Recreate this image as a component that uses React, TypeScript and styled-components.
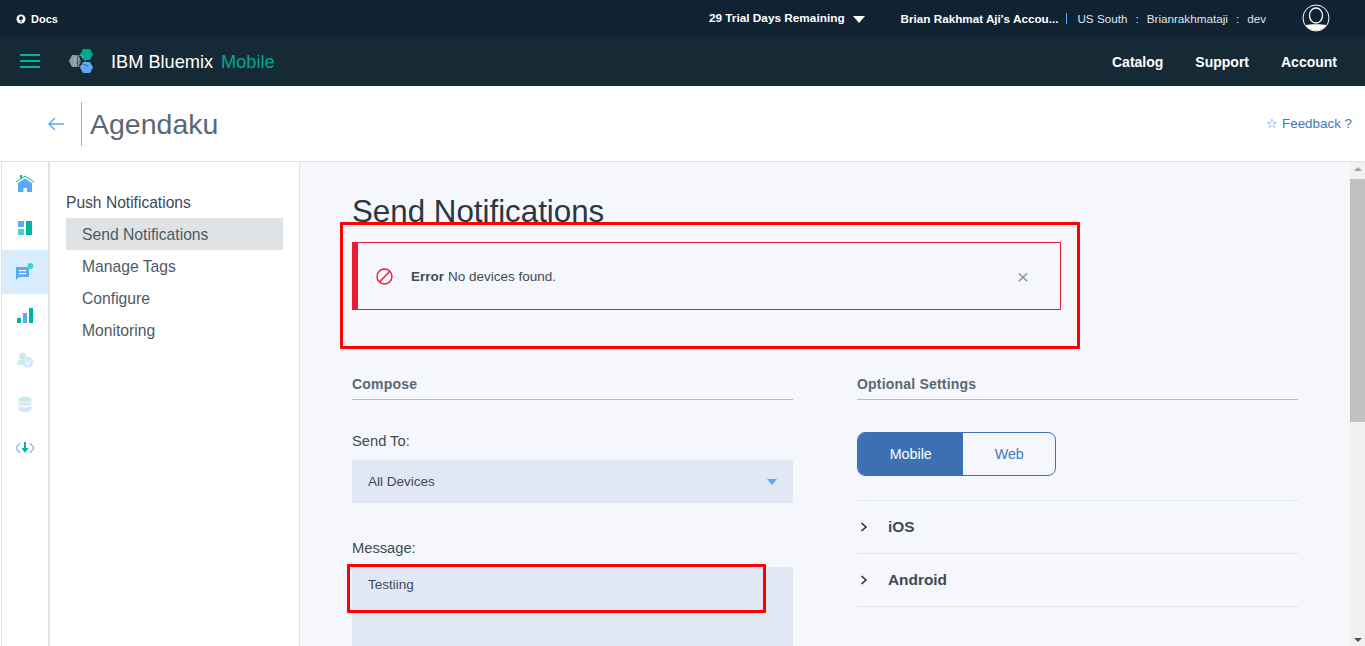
import styled, { createGlobalStyle } from "styled-components";

const GlobalStyle = createGlobalStyle`
  html, body {
    margin: 0;
    height: 100%;
    overflow: hidden;
    background: #fff;
    font-family: "Liberation Sans", Arial, sans-serif;
  }
  * { box-sizing: border-box; }
`;

const Page = styled.div`
  width: 1365px;
  height: 646px;
  display: flex;
  flex-direction: column;
  overflow: hidden;
`;

const TopBar = styled.div`
  height: 36px;
  flex: none;
  background: #112233;
  color: #fff;
  display: flex;
  align-items: center;
  padding: 0 35px 0 16px;
  font-size: 11.7px;
`;

const DocsLink = styled.div`
  display: flex;
  align-items: center;
  gap: 5px;
  font-size: 11px;
  font-weight: 700;
  margin-right: auto;
  position: relative;
  top: 1px;
`;

const TrialLabel = styled.div`
  display: flex;
  align-items: center;
  font-weight: 700;
  font-size: 11.8px;
  margin-right: 36px;
`;

const Caret = styled.span`
  width: 0;
  height: 0;
  margin-left: 8px;
  margin-top: 2px;
  border-left: 6px solid transparent;
  border-right: 6px solid transparent;
  border-top: 7px solid #fff;
`;

const AccountName = styled.span`
  font-weight: 700;
`;

const Pipe = styled.span`
  width: 1px;
  height: 11px;
  background: #5aaafa;
  margin: 0 10px 0 8px;
`;

const OrgText = styled.span`
  color: #dfe6eb;
`;

const Colon = styled.span`
  color: #dfe6eb;
  margin: 0 8px;
`;

const Avatar = styled.svg`
  margin-left: 36px;
`;

const NavBar = styled.div`
  height: 50px;
  flex: none;
  background: #162a36;
  display: flex;
  align-items: center;
  padding: 0 28px 0 20px;
`;

const Burger = styled.div`
  width: 20px;
  height: 14px;
  display: flex;
  flex-direction: column;
  justify-content: space-between;
  margin-right: 28px;

  span {
    height: 2px;
    background: #00b4a0;
  }
`;

const Brand = styled.div`
  color: #fff;
  font-size: 18.2px;
  line-height: 24px;
  padding-top: 2px;
  margin-left: 17px;
  margin-right: auto;

  em {
    font-style: normal;
    color: #00a78f;
    margin-left: 8px;
  }
`;

const NavLink = styled.a`
  color: #fff;
  font-size: 14px;
  font-weight: 700;
  line-height: 18px;
  padding-top: 1px;
  margin-left: 32px;
`;

const AppHeader = styled.div`
  height: 76px;
  flex: none;
  background: #fff;
  display: flex;
  align-items: center;
  padding: 0 13px 0 47px;
  border-bottom: 1px solid #dfe3e8;
`;

const BackDivider = styled.div`
  width: 1px;
  height: 44px;
  background: #a8adb3;
  margin-left: 16px;
  margin-right: 8px;
`;

const AppTitle = styled.h1`
  margin: 0;
  padding-top: 2px;
  font-size: 28.5px;
  font-weight: 400;
  color: #5a6872;
  margin-right: auto;
`;

const Feedback = styled.a`
  color: #4178be;
  font-size: 13.4px;
`;

const Body = styled.div`
  flex: 1;
  display: flex;
  min-height: 0;
  position: relative;
`;

const Rail = styled.div`
  width: 49px;
  flex: none;
  margin-left: 1px;
  border-right: 2px solid #dfe3e8;
  border-left: 1px solid #dfe3e8;
  display: flex;
  flex-direction: column;
  background: #fff;
`;

const RailItem = styled.div<{ $active?: boolean }>`
  height: 44px;
  display: flex;
  align-items: center;
  justify-content: center;
  background: ${(p) => (p.$active ? "#d9edfc" : "transparent")};
`;

const SubNav = styled.div`
  width: 250px;
  flex: none;
  padding: 31px 16px 0 16px;
  border-right: 1px solid #dfe3e8;
  background: #fff;
`;

const SubNavTitle = styled.div`
  font-size: 15.6px;
  color: #3d4a54;
  line-height: 20px;
  margin-bottom: 5px;
`;

const SubNavItem = styled.div<{ $active?: boolean }>`
  height: 32px;
  line-height: 34px;
  padding-left: 16px;
  font-size: 15.7px;
  width: 217px;
  color: #4d5a64;
  background: ${(p) => (p.$active ? "#dfe3e6" : "transparent")};
`;

const Content = styled.div`
  flex: 1;
  background: #f5f7fc;
  padding: 31px 0 0 52px;
  overflow: hidden;
`;

const PageTitle = styled.h2`
  margin: 0;
  font-size: 31.3px;
  line-height: 38px;
  font-weight: 400;
  color: #2a3742;
`;

const Alert = styled.div`
  width: 709px;
  height: 68px;
  margin-top: 11px;
  border: 1px solid #e71d32;
  border-left: 6px solid #e71d32;
  display: flex;
  align-items: center;
  padding: 0 31px 0 18px;
  font-size: 13.5px;
  color: #3d4a54;

  b {
    margin-left: 18px;
    margin-right: 4px;
  }
`;

const AlertClose = styled.span`
  margin-left: auto;
  color: #8c9ba5;
  font-size: 21px;
  line-height: 1;
`;

const Columns = styled.div`
  display: flex;
  gap: 64px;
  margin-top: 63px;
`;

const Column = styled.div`
  width: 441px;
`;

const SectionHead = styled.div`
  font-size: 14px;
  font-weight: 700;
  color: #5a6872;
  height: 27px;
  line-height: 22px;
  border-bottom: 1px solid #b4bcc6;
  letter-spacing: 0.2px;
`;

const FieldLabel = styled.div<{ $gap: number }>`
  font-size: 14.7px;
  color: #3d4a54;
  line-height: 20px;
  margin-top: ${(p) => p.$gap}px;
  margin-bottom: 9px;
`;

const SelectBox = styled.div`
  height: 43px;
  background: #e2e8f3;
  display: flex;
  align-items: center;
  justify-content: space-between;
  padding: 0 16px;
  font-size: 13.5px;
  color: #3d4a54;
`;

const SelectCaret = styled.span`
  width: 0;
  height: 0;
  border-left: 5px solid transparent;
  border-right: 5px solid transparent;
  border-top: 6px solid #5aaafa;
`;

const MessageBox = styled.div`
  height: 120px;
  background: #e2e8f3;
  padding: 9px 16px;
  font-size: 13.5px;
  line-height: 17px;
  color: #3d4a54;
`;

const Toggle = styled.div`
  display: flex;
  width: 199px;
  height: 44px;
  margin-top: 32px;
  border: 1px solid #3d70b2;
  border-radius: 8px;
  overflow: hidden;
  font-size: 14.3px;
`;

const ToggleOption = styled.div<{ $on?: boolean }>`
  display: flex;
  align-items: center;
  justify-content: center;
  width: ${(p) => (p.$on ? "106px" : "92px")};
  background: ${(p) => (p.$on ? "#3d70b2" : "transparent")};
  color: ${(p) => (p.$on ? "#fff" : "#4178be")};
`;

const Accordion = styled.div`
  margin-top: 24px;
  border-top: 1px solid #dfe6eb;
`;

const AccordionRow = styled.div`
  height: 53px;
  display: flex;
  align-items: center;
  gap: 20px;
  padding-left: 3px;
  border-bottom: 1px solid #dfe3e8;
  font-size: 15.4px;
  font-weight: 700;
  color: #3d4a54;
`;

const Scrollbar = styled.div`
  width: 15px;
  flex: none;
  background: #f1f1f1;
  display: flex;
  flex-direction: column;
  align-items: center;
  padding-top: 17px;
  position: relative;
`;

const ScrollThumb = styled.div`
  width: 15px;
  height: 243px;
  background: #c1c1c1;
`;

const ScrollArrow = styled.span<{ $down?: boolean }>`
  position: absolute;
  left: 4px;
  ${(p) => (p.$down ? "bottom: 4px;" : "top: 5px;")}
  width: 0;
  height: 0;
  border-left: 4px solid transparent;
  border-right: 4px solid transparent;
  ${(p) =>
    p.$down ? "border-top: 4px solid #505050;" : "border-bottom: 4px solid #a3a3a3;"}
`;

// red annotation boxes drawn over the screenshot
const Mark = styled.div<{ $x: number; $y: number; $w: number; $h: number }>`
  position: absolute;
  left: ${(p) => p.$x}px;
  top: ${(p) => p.$y}px;
  width: ${(p) => p.$w}px;
  height: ${(p) => p.$h}px;
  border: 3px solid #ff0000;
  border-radius: 1px;
  pointer-events: none;
`;

function Logo() {
  return (
    <svg width="26" height="26" viewBox="0 0 26 26">
      <polygon points="4,7 10,7 13,13 10,19 4,19 1,13" fill="#8d9ba3" />
      <polygon points="15,1 22,1 25,6.5 22,12 15,12 12,6.5" fill="#00a78f" />
      <polygon points="15,14 22,14 25,19.5 22,25 15,25 12,19.5" fill="#5aaafa" />
      <circle cx="12" cy="13" r="5.5" fill="none" stroke="#d5dde2" strokeWidth="0.7" opacity="0.6" />
      <path d="M8 16 L19 9 M9.5 7 L9.5 19 M12 15 L20 18" stroke="#2c4452" strokeWidth="0.7" />
    </svg>
  );
}

function RailIcon({ name }: { name: string }) {
  const blue = "#5aaafa";
  const teal = "#00b4a0";
  const mint = "#41d6c3";
  switch (name) {
    case "home":
      return (
        <svg width="20" height="18" viewBox="0 0 20 18">
          <path d="M1 7 L10 1 L19 7" fill="none" stroke={teal} strokeWidth="1" />
          <rect x="5" y="0" width="2" height="3" fill={teal} />
          <path d="M3 8 L10 3.5 L17 8 V17 H12 V13 H8.5 V17 H3 Z" fill={blue} />
        </svg>
      );
    case "dash":
      return (
        <svg width="15" height="14" viewBox="0 0 15 14">
          <rect x="0" y="0" width="6" height="6" fill={blue} />
          <rect x="0" y="8" width="6" height="6" fill={mint} />
          <rect x="8" y="0" width="6" height="14" fill={teal} />
        </svg>
      );
    case "push":
      return (
        <svg width="18" height="18" viewBox="0 0 18 18">
          <path d="M0 4 H13 V14 H3 L0 17 Z" fill={blue} />
          <rect x="3" y="7" width="7" height="1.2" fill="#fff" />
          <rect x="3" y="10" width="7" height="1.2" fill="#fff" />
          <circle cx="14.5" cy="3" r="3" fill={mint} />
        </svg>
      );
    case "chart":
      return (
        <svg width="16" height="16" viewBox="0 0 16 16">
          <rect x="0" y="10" width="4" height="5" fill={teal} />
          <rect x="6" y="5" width="4" height="10" fill={blue} />
          <rect x="12" y="0" width="4" height="15" fill={teal} />
        </svg>
      );
    case "auth":
      return (
        <svg width="18" height="18" viewBox="0 0 18 18">
          <circle cx="6.5" cy="5" r="3.5" fill="#c4eee6" />
          <path d="M1 14 C1 10 4 8 7 8 L9 13 L7 14 Z" fill="#c4eee6" />
          <circle cx="12" cy="11" r="5.5" fill="#d3e9fb" />
          <path d="M9.5 11 L11.5 13 L14.5 9.5" fill="none" stroke="#fff" strokeWidth="1.2" />
        </svg>
      );
    case "data":
      return (
        <svg width="14" height="17" viewBox="0 0 14 17">
          <ellipse cx="7" cy="3.5" rx="6.5" ry="3" fill="#c4eee6" />
          <path d="M0.5 5 C2 7.5 12 7.5 13.5 5 V8 C12 10.5 2 10.5 0.5 8 Z" fill="#d3e9fb" />
          <path d="M0.5 9.5 C2 12 12 12 13.5 9.5 V13.5 C12 17 2 17 0.5 13.5 Z" fill="#d3e9fb" />
        </svg>
      );
    default:
      return (
        <svg width="20" height="14" viewBox="0 0 20 14">
          <path d="M5 2 L1 7 L5 12 M15 2 L19 7 L15 12" fill="none" stroke={blue} strokeWidth="1.1" />
          <rect x="9" y="1" width="2" height="7" fill={teal} />
          <path d="M6.5 7 H13.5 L10 12 Z" fill={teal} />
        </svg>
      );
  }
}

function Chevron() {
  return (
    <svg width="8" height="10" viewBox="0 0 8 10">
      <path d="M1.5 1 L6 5 L1.5 9" fill="none" stroke="#26323c" strokeWidth="1.6" />
    </svg>
  );
}

export default function App() {
  return (
    <Page>
      <GlobalStyle />
      <TopBar>
        <DocsLink>
          <svg width="10" height="10" viewBox="0 0 10 10">
            <circle cx="5" cy="5" r="4.5" fill="#fff" />
            <circle cx="5" cy="4.2" r="2" fill="#112233" />
            <rect x="4.4" y="6.6" width="1.2" height="1.6" fill="#112233" />
          </svg>
          Docs
        </DocsLink>
        <TrialLabel>
          29 Trial Days Remaining
          <Caret />
        </TrialLabel>
        <AccountName>Brian Rakhmat Aji's Accou...</AccountName>
        <Pipe />
        <OrgText>US South</OrgText>
        <Colon>:</Colon>
        <OrgText>Brianrakhmataji</OrgText>
        <Colon>:</Colon>
        <OrgText>dev</OrgText>
        <Avatar width="28" height="28" viewBox="0 0 28 28">
          <circle cx="14" cy="14" r="13" fill="none" stroke="#fff" strokeWidth="1" />
          <ellipse cx="14" cy="11.5" rx="6.5" ry="7.5" fill="none" stroke="#fff" strokeWidth="1.3" />
          <path d="M4 21 C8 20 20 20 24 21 C21 28 7 28 4 21 Z" fill="#fff" />
        </Avatar>
      </TopBar>
      <NavBar>
        <Burger>
          <span />
          <span />
          <span />
        </Burger>
        <Logo />
        <Brand>
          IBM Bluemix<em>Mobile</em>
        </Brand>
        <NavLink>Catalog</NavLink>
        <NavLink>Support</NavLink>
        <NavLink>Account</NavLink>
      </NavBar>
      <AppHeader>
        <svg width="18" height="14" viewBox="0 0 18 14">
          <path d="M17 7 H2 M8 1 L2 7 L8 13" fill="none" stroke="#5aaafa" strokeWidth="1.5" />
        </svg>
        <BackDivider />
        <AppTitle>Agendaku</AppTitle>
        <Feedback>☆ Feedback ?</Feedback>
      </AppHeader>
      <Body>
        <Rail>
          {["home", "dash", "push", "chart", "auth", "data", "sdk"].map((name) => (
            <RailItem key={name} $active={name === "push"}>
              <RailIcon name={name} />
            </RailItem>
          ))}
        </Rail>
        <SubNav>
          <SubNavTitle>Push Notifications</SubNavTitle>
          <SubNavItem $active>Send Notifications</SubNavItem>
          <SubNavItem>Manage Tags</SubNavItem>
          <SubNavItem>Configure</SubNavItem>
          <SubNavItem>Monitoring</SubNavItem>
        </SubNav>
        <Content>
          <PageTitle>Send Notifications</PageTitle>
          <Alert>
            <svg width="17" height="17" viewBox="0 0 17 17">
              <circle cx="8.5" cy="8.5" r="7.5" fill="none" stroke="#e71d32" strokeWidth="1.4" />
              <path d="M3.5 14 L14 3" stroke="#e71d32" strokeWidth="1.4" />
            </svg>
            <b>Error</b> No devices found.
            <AlertClose>×</AlertClose>
          </Alert>
          <Columns>
            <Column>
              <SectionHead>Compose</SectionHead>
              <FieldLabel $gap={31}>Send To:</FieldLabel>
              <SelectBox>
                All Devices
                <SelectCaret />
              </SelectBox>
              <FieldLabel $gap={35}>Message:</FieldLabel>
              <MessageBox>Testiing</MessageBox>
            </Column>
            <Column>
              <SectionHead>Optional Settings</SectionHead>
              <Toggle>
                <ToggleOption $on>Mobile</ToggleOption>
                <ToggleOption>Web</ToggleOption>
              </Toggle>
              <Accordion>
                <AccordionRow>
                  <Chevron />
                  iOS
                </AccordionRow>
                <AccordionRow>
                  <Chevron />
                  Android
                </AccordionRow>
              </Accordion>
            </Column>
          </Columns>
        </Content>
        <Scrollbar>
          <ScrollArrow />
          <ScrollThumb />
          <ScrollArrow $down />
        </Scrollbar>
        <Mark $x={340} $y={60} $w={740} $h={127} />
        <Mark $x={347} $y={402} $w={419} $h={49} />
      </Body>
    </Page>
  );
}
